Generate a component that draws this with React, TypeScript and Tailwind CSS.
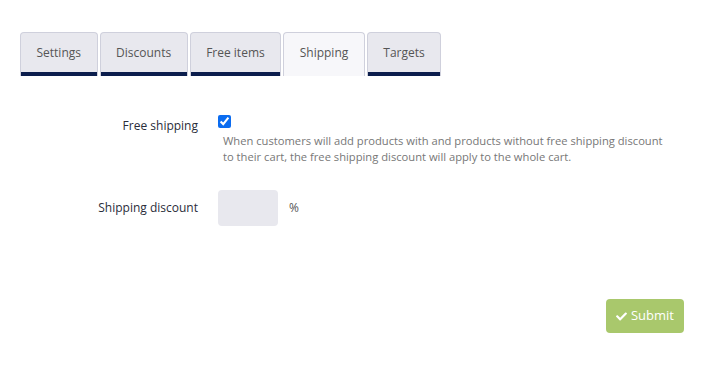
import { FaCheck } from "react-icons/fa";

const tabs = ["Settings", "Discounts", "Free items", "Shipping", "Targets"];

export default function App() {
  const active = "Shipping";
  return (
    <div className="w-[702px] h-[370px] bg-white text-[12px] text-[#333] font-['Open_Sans',sans-serif]">
      <div className="flex gap-[2px] pl-[20px] pt-[32px]">
        {tabs.map((t) => (
          <div
            key={t}
            className={
              "h-[44px] px-[15.5px] pb-[4px] flex items-center justify-center rounded-t-[4px] border border-b-0 border-[#cfd0dc] text-[#555] " +
              (t === active
                ? "bg-[#f7f7fa] text-[#333]"
                : "bg-[#e8e8ee] shadow-[inset_0_-4px_0_#0c1e4d]")
            }
          >
            {t}
          </div>
        ))}
      </div>

      <div className="pt-[36px]">
        <div className="flex">
          <div className="w-[198px] text-right pt-[5px] leading-[18px] text-[#2a2d3a]">Free shipping</div>
          <div className="pl-[20px]">
            <input
              type="checkbox"
              defaultChecked
              className="w-[13px] h-[13px] mt-[3px] accent-[#0b6cf0] block"
            />
            <p className="pl-[5px] mt-[5px] text-[11.2px] leading-[16px] text-[#777] w-[450px]">
              When customers will add products with and products without free shipping discount
              to their cart, the free shipping discount will apply to the whole cart.
            </p>
          </div>
        </div>

        <div className="flex items-center mt-[25px]">
          <div className="w-[198px] text-right text-[#2a2d3a]">Shipping discount</div>
          <input
            type="text"
            className="ml-[20px] w-[60px] h-[36px] rounded-[4px] bg-[#e8e8ee] outline-none px-2"
          />
          <span className="ml-[11px] text-[#555]">%</span>
        </div>
      </div>

      <div className="flex justify-end pr-[18px] mt-[73px]">
        <button className="h-[34px] px-[10px] rounded-[4px] bg-[#a9c86c] text-white flex items-center gap-[4px] text-[13px]">
          <FaCheck className="w-[11px] h-[11px]" />
          Submit
        </button>
      </div>
    </div>
  );
}
